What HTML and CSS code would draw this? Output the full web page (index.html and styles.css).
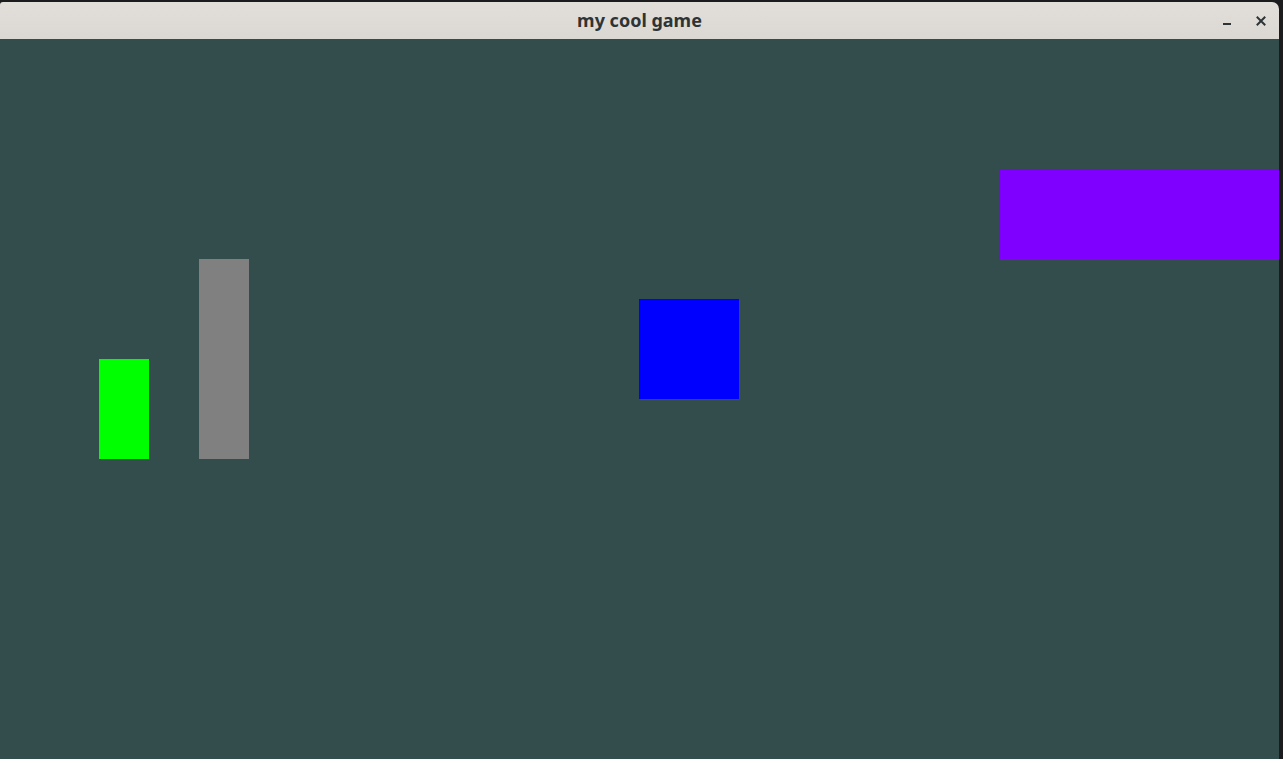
FILE: index.html
```html
<!DOCTYPE html>
<html>
<head>
<meta charset="utf-8">
<title>my cool game</title>
<link rel="stylesheet" href="styles.css">
</head>
<body>
<div class="window">
  <div class="titlebar">
    <div class="title">my cool game</div>
    <div class="controls">
      <span class="btn minimize"><svg width="16" height="16" viewBox="0 0 16 16"><rect x="4" y="10" width="8" height="2" fill="#2e3436"/></svg></span>
      <span class="btn close"><svg width="16" height="16" viewBox="0 0 16 16"><path d="M4.5 4.5 L11.5 11.5 M11.5 4.5 L4.5 11.5" stroke="#2e3436" stroke-width="2" stroke-linecap="square"/></svg></span>
    </div>
  </div>
  <div class="canvas">
    <div class="shape player"></div>
    <div class="shape pillar"></div>
    <div class="shape box"></div>
    <div class="shape platform"></div>
  </div>
</div>
</body>
</html>
```

FILE: styles.css
```css
html, body {
  margin: 0;
  padding: 0;
  height: 100%;
  background: #1c1c1e;
  overflow: hidden;
}
.window {
  margin-top: 2px;
  width: 1279px;
  height: 757px;
  display: flex;
  flex-direction: column;
  border-top-left-radius: 3px;
  border-top-right-radius: 7px;
  overflow: hidden;
}
.titlebar {
  height: 37px;
  flex: none;
  background: linear-gradient(#e2dfdb, #dbd8d4);
  position: relative;
  display: flex;
  align-items: center;
  justify-content: center;
}
.title {
  font-family: "Noto Sans", "DejaVu Sans", sans-serif;
  font-weight: 700;
  font-size: 18px;
  color: #2e3436;
  margin-top: -2px;
}
.controls {
  position: absolute;
  right: 10px;
  top: 11px;
  display: flex;
  gap: 18px;
}
.btn {
  width: 16px;
  height: 16px;
  display: block;
}
.btn svg { display: block; }
.canvas {
  flex: 1;
  position: relative;
  background: #334d4d;
}
.shape { position: absolute; }
.player { left: 99px; top: 320px; width: 50px; height: 100px; background: #00ff00; }
.pillar { left: 199px; top: 220px; width: 50px; height: 200px; background: #808080; }
.box { left: 639px; top: 260px; width: 100px; height: 100px; background: #0000ff; }
.platform { left: 999px; top: 130px; width: 300px; height: 90px; background: #8000ff; }
```
